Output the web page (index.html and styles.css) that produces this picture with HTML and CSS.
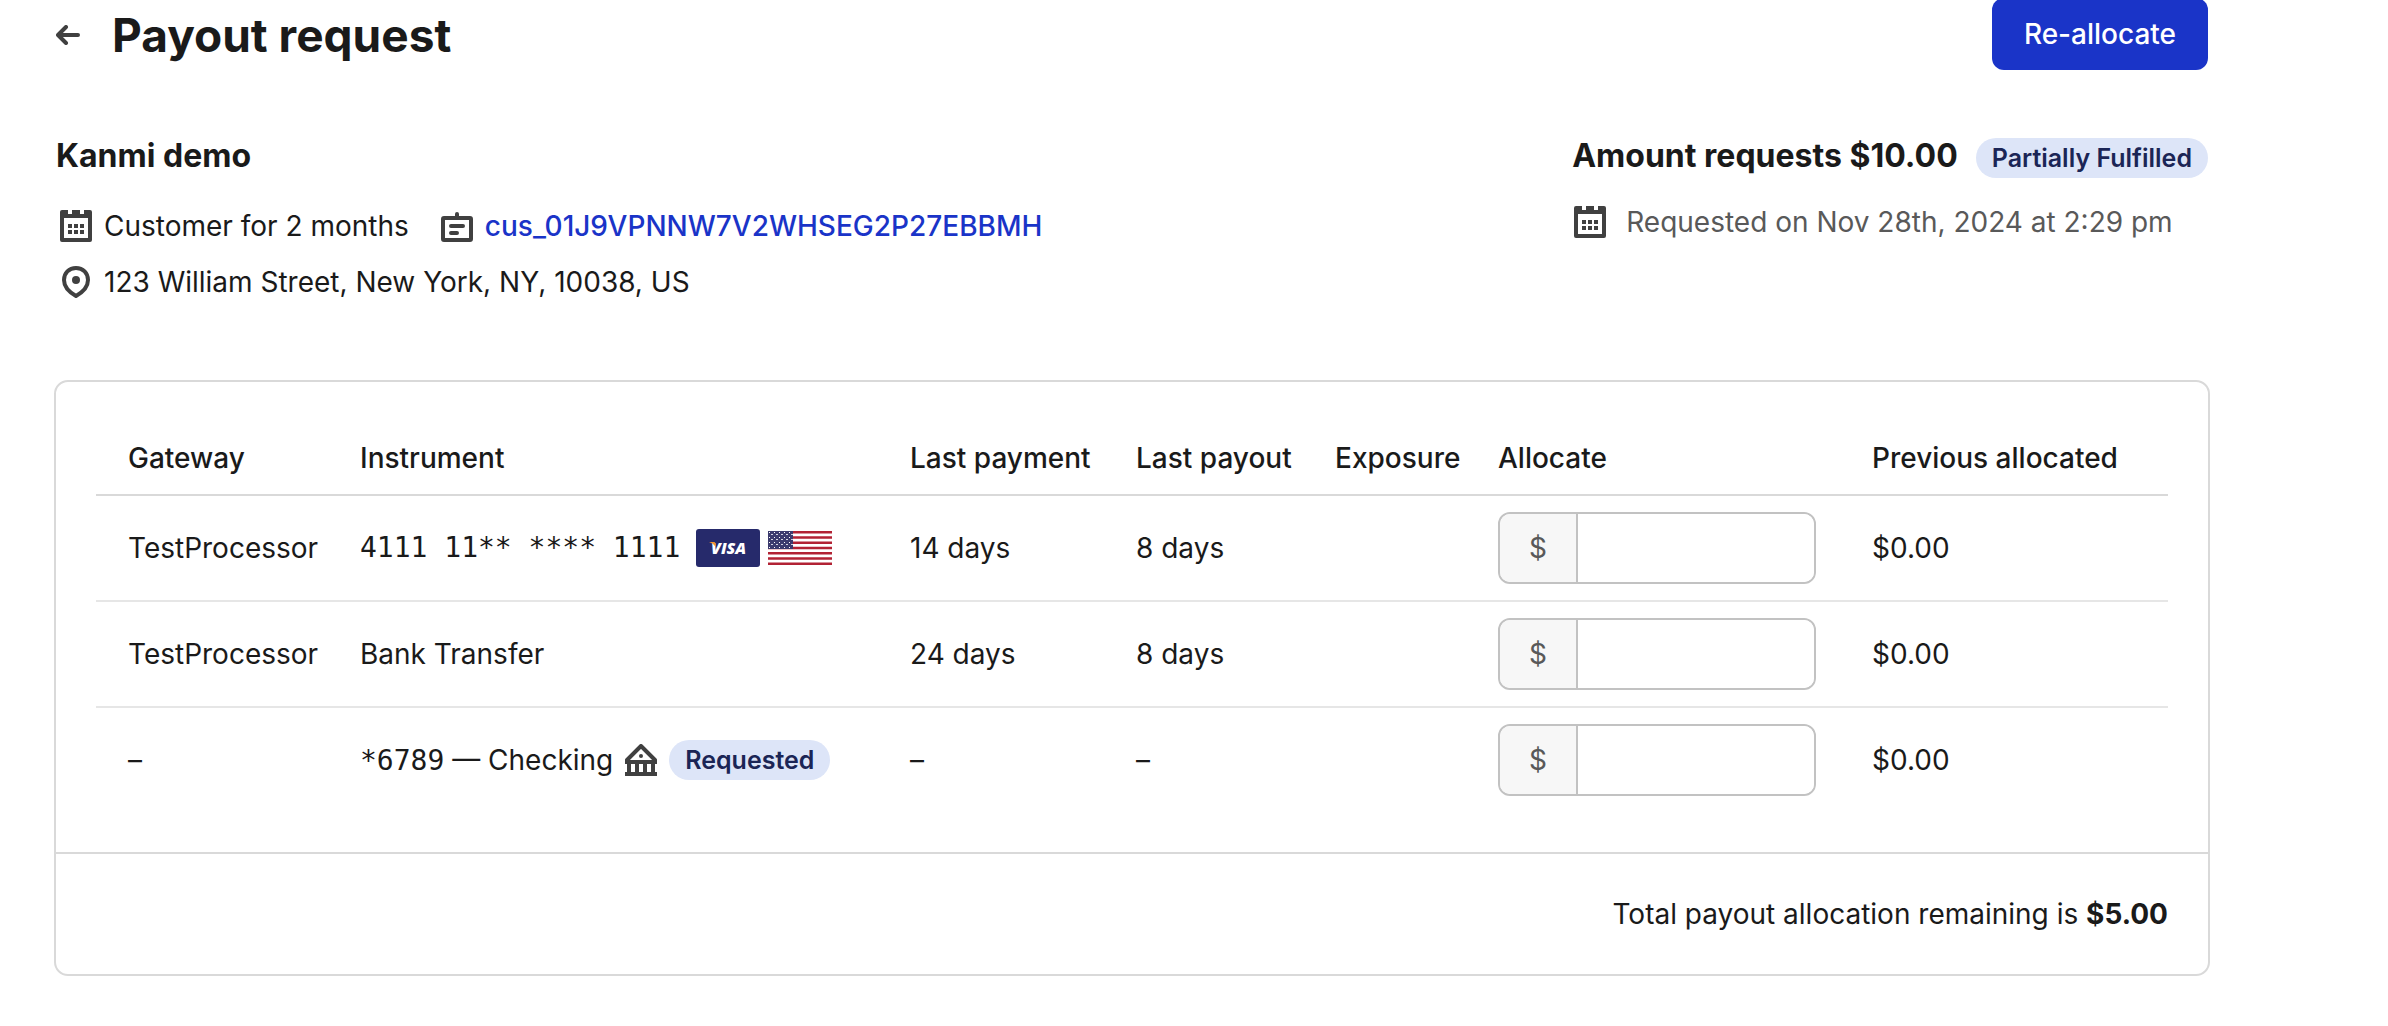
FILE: index.html
```html
<!DOCTYPE html>
<html lang="en">
<head>
<meta charset="utf-8">
<meta name="viewport" content="width=device-width, initial-scale=1">
<title>Payout request</title>
<link rel="stylesheet" href="styles.css">
</head>
<body>
<svg class="sprite" aria-hidden="true">
  <symbol id="calendar" viewBox="0 0 32 32">
    <path fill-rule="evenodd" d="M2 0H8V4H12V0H20V4H24V0H30A2 2 0 0 1 32 2V30A2 2 0 0 1 30 32H2A2 2 0 0 1 0 30V2A2 2 0 0 1 2 0ZM4 8V28H28V8Z"/>
    <path d="M8 14h4v4H8zM14 14h4v4h-4zM20 14h4v4h-4zM8 20h4v4H8zM14 20h4v4h-4zM20 20h4v4h-4z"/>
  </symbol>
</svg>
<main class="page">
  <header class="page-header">
    <a class="back" href="#" aria-label="Back">
      <svg width="24" height="20" viewBox="0 0 24 20" fill="none" stroke="currentColor" stroke-width="4" stroke-linecap="round" stroke-linejoin="round"><path d="M22 10H3M10 2L2 10L10 18"/></svg>
    </a>
    <h1 class="title">Payout request</h1>
    <button class="primary" type="button">Re-allocate</button>
  </header>

  <section class="summary">
    <div class="customer">
      <h2 class="heading">Kanmi demo</h2>
      <ul class="facts">
        <li class="fact">
          <svg class="icon" width="32" height="32"><use href="#calendar"/></svg>
          <span>Customer for 2 months</span>
        </li>
        <li class="fact">
          <svg class="icon" width="32" height="32" viewBox="0 0 32 32">
            <path fill="none" stroke="currentColor" stroke-width="4" stroke-linejoin="round" d="M3 8H29A1 1 0 0 1 30 9V29A1 1 0 0 1 29 30H3A1 1 0 0 1 2 29V9A1 1 0 0 1 3 8Z"/>
            <path fill="none" stroke="currentColor" stroke-width="4" stroke-linecap="round" d="M16 4V7M10 16H22M10 23H16"/>
          </svg>
          <a class="link" href="#">cus_01J9VPNNW7V2WHSEG2P27EBBMH</a>
        </li>
      </ul>
      <ul class="facts">
        <li class="fact">
          <svg class="icon" width="32" height="32" viewBox="0 0 32 32">
            <path fill="none" stroke="currentColor" stroke-width="4" stroke-linejoin="round" d="M16 2C9 2 4 7 4 14C4 21 9 26 16 30C23 26 28 21 28 14C28 7 23 2 16 2Z"/>
            <circle cx="16" cy="14" r="4"/>
          </svg>
          <span>123 William Street, New York, NY, 10038, US</span>
        </li>
      </ul>
    </div>
    <div class="amount">
      <div class="amount-line">
        <h2 class="heading">Amount requests $10.00</h2>
        <span class="badge">Partially Fulfilled</span>
      </div>
      <div class="requested-on">
        <svg class="icon" width="32" height="32"><use href="#calendar"/></svg>
        <span>Requested on Nov 28th, 2024 at 2:29 pm</span>
      </div>
    </div>
  </section>

  <section class="card">
    <div class="card-body">
      <table class="allocations">
        <colgroup>
          <col class="col-gateway"><col><col class="col-payment"><col class="col-payout"><col class="col-exposure"><col class="col-allocate"><col class="col-previous">
        </colgroup>
        <thead>
          <tr><th>Gateway</th><th>Instrument</th><th>Last payment</th><th>Last payout</th><th>Exposure</th><th>Allocate</th><th>Previous allocated</th></tr>
        </thead>
        <tbody>
          <tr>
            <td>TestProcessor</td>
            <td>
              <div class="instrument card-number">
                <span class="mono">4111 11** **** 1111</span>
                <span class="marks">
                  <svg width="64" height="38" viewBox="0 0 64 38" role="img" aria-label="Visa">
                    <rect width="64" height="38" rx="3" fill="#262a6b"/>
                    <text class="visa" x="15" y="25">VISA</text>
                    <path fill="#f0932f" d="M13 13H18Q20 13 20 18Q17 14 13 13Z"/>
                  </svg>
                  <svg width="64" height="34" viewBox="0 0 64 34" role="img" aria-label="United States">
                    <defs>
                      <pattern id="stars" width="5" height="5" patternUnits="userSpaceOnUse">
                        <rect x="1" y="1" width="1" height="1" fill="#fff"/><rect x="3" y="3" width="2" height="1" fill="#d3d2e0"/>
                      </pattern>
                    </defs>
                    <rect width="64" height="34" fill="#fff"/>
                    <path stroke="#b22234" stroke-width="2.62" d="M0 1.3H64M0 6.5H64M0 11.8H64M0 17H64M0 22.2H64M0 27.5H64M0 32.7H64"/>
                    <rect width="25" height="18" fill="#3c3b6e"/>
                    <rect width="25" height="18" fill="url(#stars)"/>
                  </svg>
                </span>
              </div>
            </td>
            <td>14 days</td><td>8 days</td><td></td>
            <td><label class="money"><span class="unit">$</span><input type="text" inputmode="decimal" aria-label="Allocate to card"></label></td>
            <td>$0.00</td>
          </tr>
          <tr>
            <td>TestProcessor</td>
            <td>Bank Transfer</td>
            <td>24 days</td><td>8 days</td><td></td>
            <td><label class="money"><span class="unit">$</span><input type="text" inputmode="decimal" aria-label="Allocate to bank transfer"></label></td>
            <td>$0.00</td>
          </tr>
          <tr>
            <td>–</td>
            <td>
              <div class="instrument">
                <span><span class="mono">*6789</span> — Checking</span>
                <svg class="icon" width="32" height="32" viewBox="0 0 32 32">
                  <path fill="none" stroke="currentColor" stroke-width="4" stroke-linejoin="round" stroke-linecap="round" d="M2 16L16 2L30 16"/>
                  <path d="M0 16H32V20H30V28H32V32H0V28H2V20H0ZM6 20V28H10V20ZM14 20V28H18V20ZM22 20V28H26V20Z" fill-rule="evenodd"/>
                  <circle cx="16" cy="12" r="2"/>
                </svg>
                <span class="badge">Requested</span>
              </div>
            </td>
            <td>–</td><td>–</td><td></td>
            <td><label class="money"><span class="unit">$</span><input type="text" inputmode="decimal" aria-label="Allocate to checking account"></label></td>
            <td>$0.00</td>
          </tr>
        </tbody>
      </table>
    </div>
    <footer class="card-footer">Total payout allocation remaining is <strong>$5.00</strong></footer>
  </section>
</main>
</body>
</html>
```
FILE: styles.css
```css
* { box-sizing: border-box; }

body {
  margin: 0;
  background: #fff;
  color: #1a1a1a;
  font: 400 28px/40px Inter, "Liberation Sans", sans-serif;
}

h1, h2, ul { margin: 0; padding: 0; }

.sprite { position: absolute; width: 0; height: 0; }

.page { padding: 0 180px 48px 56px; }

.page-header {
  display: flex;
  align-items: center;
  gap: 32px;
  height: 70px;
}
.back { display: flex; color: #404040; }
.title { font-size: 46px; line-height: 56px; font-weight: 700; }

.primary {
  margin-left: auto;
  margin-top: -2px;
  height: 72px;
  padding: 0 32px;
  border: 0;
  border-radius: 12px;
  background: #1a34c8;
  color: #fff;
  font: inherit;
  font-weight: 500;
}

.summary {
  display: flex;
  justify-content: space-between;
  padding: 64px 0 78px;
}
.customer, .amount { display: flex; flex-direction: column; }
.customer { gap: 16px; }
.amount { gap: 24px; }
.customer .heading { margin-bottom: 12px; }

.heading { font-size: 32px; line-height: 44px; font-weight: 700; }

.facts { display: flex; gap: 28px; list-style: none; }
.fact { display: flex; align-items: center; gap: 12px; padding-left: 4px; }
.icon { flex: none; color: #404040; fill: currentColor; }
.link { color: #1a34c8; font-weight: 500; text-decoration: none; }

.amount-line { display: flex; align-items: center; gap: 18px; }
.amount-line .badge { margin-top: 4px; }
.requested-on { display: flex; align-items: center; gap: 20px; padding-left: 2px; color: #595959; }

.badge {
  padding: 0 16px;
  border-radius: 20px;
  background: #dde5f8;
  color: #1b2556;
  font-size: 25px;
  font-weight: 600;
  line-height: 40px;
  white-space: nowrap;
}

.card {
  margin: 0 -2px;
  border: 2px solid #d9d9d9;
  border-radius: 14px;
}
.card-body { padding: 40px; }

.allocations { width: 100%; border-collapse: separate; border-spacing: 0; table-layout: fixed; }
.col-gateway { width: 240px; }
.col-payment { width: 226px; }
.col-payout { width: 199px; }
.col-exposure { width: 163px; }
.col-allocate { width: 374px; }
.col-previous { width: 320px; }

th, td { padding: 0 0 0 24px; text-align: left; white-space: nowrap; }
th:first-child, td:first-child { padding-left: 32px; }
th { height: 74px; border-bottom: 2px solid #d9d9d9; font-weight: 500; }
td { height: 106px; border-bottom: 2px solid #e6e6e6; }
tbody tr:last-child td { height: 104px; border-bottom: 0; }

.instrument { display: flex; align-items: center; gap: 12px; }
.card-number { gap: 16px; }
.mono { font-family: "DejaVu Sans Mono", monospace; line-height: 1; }
.marks { display: flex; align-items: center; gap: 8px; }
.visa { fill: #fff; font: italic 800 16px "Open Sans", sans-serif; }

.money {
  display: flex;
  width: 318px;
  height: 72px;
  border: 2px solid #c2c2c2;
  border-radius: 12px;
  overflow: hidden;
}
.unit {
  flex: none;
  width: 78px;
  border-right: 2px solid #c2c2c2;
  background: #f7f7f7;
  color: #595959;
  line-height: 68px;
  text-align: center;
}
.money input {
  flex: 1;
  min-width: 0;
  padding: 0 24px;
  border: 0;
  outline: 0;
  background: #fff;
  color: inherit;
  font: inherit;
}

.card-footer {
  padding: 40px;
  border-top: 2px solid #d9d9d9;
  text-align: right;
}
.card-footer strong { font-weight: 700; }
```
